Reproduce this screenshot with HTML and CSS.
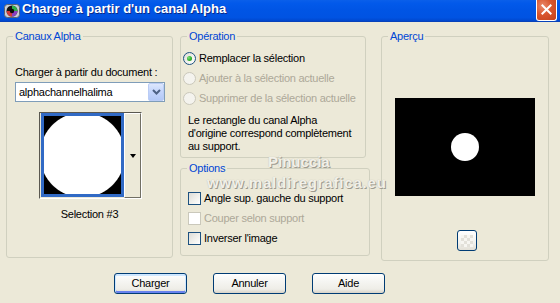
FILE: index.html
```html
<!DOCTYPE html>
<html lang="fr">
<head>
<meta charset="utf-8">
<title>Charger à partir d'un canal Alpha</title>
<link rel="stylesheet" href="styles.css">
</head>
<body>
<div class="window">
  <div class="titlebar">
    <svg class="app-icon" width="16" height="16" viewBox="0 0 16 16">
      <rect x="0.5" y="1.5" width="15" height="13" rx="3" fill="#c9ced6" stroke="#5d6470"/>
      <circle cx="8" cy="8" r="5.5" fill="#151515"/>
      <path d="M8 8 L8 2.5 A5.5 5.5 0 0 1 13.5 8 Z" fill="#2eb04a"/>
      <path d="M8 8 L13.5 8 A5.5 5.5 0 0 1 8 13.5 Z" fill="#8a3fc0"/>
      <path d="M8 8 L8 13.5 A5.5 5.5 0 0 1 2.5 8 Z" fill="#d23a3a"/>
      <circle cx="8" cy="8" r="2.2" fill="#0b0b0b"/>
    </svg>
    <span class="title">Charger à partir d'un canal Alpha</span>
    <span class="close">
      <svg width="21" height="21" viewBox="0 0 21 21"><path d="M6 6 L15 15 M15 6 L6 15" stroke="#fff" stroke-width="2.2" stroke-linecap="square"/></svg>
    </span>
  </div>

  <div class="client">
    <div class="groups">
      <div class="group g-canaux">
        <div class="legend">Canaux Alpha</div>
        <div class="lbl-doc">Charger à partir du document :</div>
        <div class="combo">
          <span class="combo-text">alphachannelhalima</span>
          <span class="combo-btn">
            <svg width="9" height="6" viewBox="0 0 9 6"><path d="M1 1 L4.5 4.5 L8 1" fill="none" stroke="#4d6185" stroke-width="2"/></svg>
          </span>
        </div>
        <div class="thumb-frame">
          <div class="thumb"><div class="thumb-img"></div></div>
          <div class="thumb-drop"><span class="tri"></span></div>
        </div>
        <div class="sel-name">Selection #3</div>
      </div>

      <div class="col-mid">
        <div class="group g-op">
          <div class="legend">Opération</div>
          <div class="opt-row"><span class="radio checked"></span><span>Remplacer la sélection</span></div>
          <div class="opt-row disabled"><span class="radio"></span><span>Ajouter à la sélection actuelle</span></div>
          <div class="opt-row disabled"><span class="radio"></span><span>Supprimer de la sélection actuelle</span></div>
          <div class="op-desc">Le rectangle du canal Alpha<br>d'origine correspond complètement<br>au support.</div>
        </div>
        <div class="group g-opt">
          <div class="legend">Options</div>
          <div class="opt-row chk"><span class="check"></span><span>Angle sup. gauche du support</span></div>
          <div class="opt-row chk disabled"><span class="check"></span><span>Couper selon support</span></div>
          <div class="opt-row chk"><span class="check"></span><span>Inverser l'image</span></div>
        </div>
      </div>

      <div class="group g-apercu">
        <div class="legend">Aperçu</div>
        <div class="preview"><div class="dot"></div></div>
        <div class="pv-btn"><span class="pv-icon"></span></div>
      </div>
    </div>

    <div class="buttons">
      <span class="btn default">Charger</span>
      <span class="btn">Annuler</span>
      <span class="btn">Aide</span>
    </div>
  </div>

  <div class="watermark">
    <div class="wm1">Pinuccia</div>
    <div class="wm2">www.maldiregrafica.eu</div>
  </div>
</div>
</body>
</html>
```
FILE: styles.css
```css
* { box-sizing: border-box; }
html, body { margin: 0; padding: 0; }
body {
  width: 560px;
  height: 303px;
  overflow: hidden;
  background: #ECE9D8;
  font-family: "Liberation Sans", Arial, sans-serif;
  font-size: 11px;
  letter-spacing: -0.25px;
  color: #000;
}
.window {
  position: relative;
  width: 560px;
  height: 303px;
  background: #ECE9D8;
}

/* title bar */
.titlebar {
  height: 22px;
  display: flex;
  align-items: flex-start;
  background: linear-gradient(to bottom, #0A5FEA 0%, #0259EA 15%, #0055E5 45%, #0053E2 80%, #0049D0 93%, #0A3DB0 100%);
}
.app-icon { margin: 3px 0 0 4px; flex: none; }
.title {
  margin-left: 2px;
  font-weight: bold;
  font-size: 13px;
  letter-spacing: 0;
  line-height: 18px;
  color: #fff;
  text-shadow: 1px 1px 0 #0A2A8A;
}
.close {
  margin-left: auto;
  margin-right: 3px;
  width: 21px;
  height: 21px;
  border: 1px solid #fff;
  border-top: none;
  border-radius: 0 0 3px 3px;
  background: radial-gradient(circle at 30% 30%, #E98A6C 0%, #D9562E 45%, #C2401C 100%);
  display: flex;
  align-items: center;
  justify-content: center;
}
.close svg { display: block; margin-top: -1px; }

/* client */
.groups {
  display: flex;
  align-items: flex-start;
  height: 251px;
  padding: 14px 0 0 6px;
}
.group {
  border: 1px solid #D0D0BF;
  border-radius: 3px;
}
.legend {
  width: fit-content;
  margin: -7px 0 0 6px;
  padding: 0 2px;
  line-height: 13px;
  color: #0046D5;
  background: #ECE9D8;
}

/* Canaux Alpha */
.g-canaux { width: 167px; height: 222px; }
.lbl-doc { margin: 23px 0 0 8px; line-height: 13px; }
.combo {
  margin: 3px 0 0 8px;
  width: 150px;
  height: 20px;
  border: 1px solid #7F9DB9;
  background: #fff;
  display: flex;
  align-items: center;
}
.combo-text { padding-left: 3px; line-height: 18px; }
.combo-btn {
  margin-left: auto;
  width: 16px;
  height: 18px;
  border: 1px solid #BACCF5;
  border-radius: 2px;
  background: linear-gradient(to bottom, #DDE7FD 0%, #C5D6FC 45%, #B3C8F7 100%);
  display: flex;
  align-items: center;
  justify-content: center;
}
.combo-btn svg { display: block; }
.thumb-frame {
  margin: 10px 0 0 32px;
  width: 103px;
  height: 87px;
  display: flex;
  border: 1px solid;
  border-color: #5A5850 #fff #fff #5A5850;
}
.thumb {
  margin-left: 1px;
  width: 83px;
  height: 84px;
  border: 3px solid #316AC5;
  background: #000;
}
.thumb-img {
  width: 100%;
  height: 100%;
  background: radial-gradient(circle 42.5px at 50% 50%, #fff 42px, #000 43px);
}
.thumb-drop {
  width: 17px;
  height: 85px;
  border: 1px solid;
  border-color: #fff #716F64 #716F64 #fff;
  background: #ECE9D8;
  display: flex;
  align-items: center;
  justify-content: center;
}
.tri {
  width: 0;
  height: 0;
  border-left: 3.5px solid transparent;
  border-right: 3.5px solid transparent;
  border-top: 4px solid #000;
}
.sel-name { margin-top: 9px; text-align: center; line-height: 13px; }

/* middle column */
.col-mid { margin-left: 7px; width: 190px; }
.g-op { width: 186px; height: 122px; }
.g-opt { width: 190px; height: 88px; margin-top: 10px; }
.opt-row {
  height: 20px;
  display: flex;
  align-items: center;
  padding-left: 2px;
}
.g-op .legend + .opt-row { margin-top: 5px; }
.opt-row.chk { padding-left: 7px; }
.g-opt .legend + .opt-row { margin-top: 13px; }
.opt-row.disabled { color: #ACA899; }
.radio {
  width: 13px;
  height: 13px;
  margin-right: 3px;
  border: 1px solid #1C5180;
  border-radius: 50%;
  background: linear-gradient(135deg, #DCDCD7 0%, #F4F4F0 60%, #FFFFFF 100%);
  display: flex;
  align-items: center;
  justify-content: center;
}
.radio.checked::after {
  content: "";
  width: 5px;
  height: 5px;
  border-radius: 50%;
  background: radial-gradient(circle at 35% 35%, #7EE07A 0%, #2FB12B 55%, #168E16 100%);
}
.disabled .radio {
  border-color: #CAC8BB;
  background: #F4F3EE;
}
.check {
  width: 13px;
  height: 13px;
  margin-right: 3px;
  border: 1px solid #1C5180;
  background: linear-gradient(135deg, #DCDCD7 0%, #F2F2EE 60%, #FFFFFF 100%);
}
.disabled .check {
  border-color: #CAC8BB;
  background: #fff;
}
.op-desc { margin: 6px 0 0 7px; line-height: 13px; }

/* Aperçu */
.g-apercu { margin-left: 11px; width: 168px; height: 225px; }
.preview {
  margin: 55px 0 0 13px;
  width: 140px;
  height: 98px;
  background: #000;
  display: flex;
  align-items: center;
  justify-content: center;
}
.dot {
  width: 28px;
  height: 28px;
  border-radius: 50%;
  background: #fff;
}
.pv-btn {
  margin: 34px 0 0 75px;
  width: 20px;
  height: 21px;
  border: 1px solid #003C74;
  border-radius: 3px;
  background: linear-gradient(to bottom, #FFFFFF, #F3F3EF 60%, #E2DFD6);
  display: flex;
  align-items: center;
  justify-content: center;
}
.pv-icon {
  width: 12px;
  height: 12px;
  background:
    linear-gradient(45deg, #E3E1DA 25%, transparent 25%, transparent 75%, #E3E1DA 75%),
    linear-gradient(45deg, #E3E1DA 25%, #F7F6F2 25%, #F7F6F2 75%, #E3E1DA 75%);
  background-size: 6px 6px;
  background-position: 0 0, 3px 3px;
}

/* bottom buttons */
.buttons {
  display: flex;
  gap: 26px;
  margin: 0 0 0 114px;
}
.btn {
  width: 73px;
  height: 21px;
  border: 1px solid #003C74;
  border-radius: 3px;
  background: linear-gradient(to bottom, #FFFFFF 0%, #F6F6F3 35%, #EEEDE7 80%, #D8D3C8 100%);
  display: flex;
  align-items: center;
  justify-content: center;
  line-height: 13px;
}
.btn.default {
  box-shadow: inset 0 1px 0 1px #CEE7FF, inset 0 -1px 0 1px #6982EE;
}

/* watermark overlay */
.watermark {
  position: absolute;
  left: 205px;
  top: 156px;
  pointer-events: none;
  font-family: "Liberation Sans", Arial, sans-serif;
  font-weight: bold;
  font-size: 15px;
  line-height: 12px;
  color: #F2F0E8;
  text-shadow: 1px 1px 0 #9E9B90, 0 0 1px #B8B5AA;
}
.wm1 { margin-left: 63px; letter-spacing: 0; }
.wm2 { margin: 9px 0 0 2px; letter-spacing: 0.8px; }
```
